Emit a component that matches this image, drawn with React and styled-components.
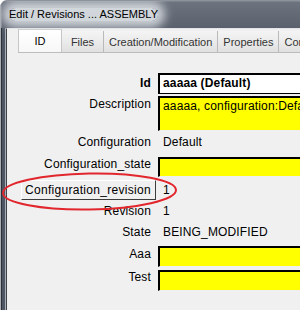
import React from "react";
import styled, { createGlobalStyle } from "styled-components";

const GlobalStyle = createGlobalStyle`
  html, body {
    margin: 0;
    padding: 0;
    background: #ffffff;
    overflow: hidden;
  }
  body {
    width: 300px;
    height: 310px;
    font-family: "Liberation Sans", Arial, sans-serif;
  }
`;

const Window = styled.div`
  position: relative;
  width: 440px;
  height: 330px;
  box-sizing: border-box;
  border-top: 1px solid #8d939b;
  border-left: 1px solid #a9aeb5;
  border-radius: 7px 0 0 0;
  background: #4e5663;
  display: flex;
  flex-direction: column;
  overflow: hidden;
`;

const TitleBar = styled.div`
  height: 27px;
  flex: none;
  display: flex;
  align-items: center;
  padding-left: 8px;
  background: linear-gradient(#6d747f, #5a616d);
  box-shadow: inset 1px 1px 0 #7b828c;
`;

const TitleText = styled.span`
  font-family: "Liberation Sans", Arial, sans-serif;
  font-size: 11px;
  line-height: 13px;
  color: #000;
  background: rgba(222, 226, 231, 0.9);
  border-radius: 9px;
  box-shadow: 0 0 10px 7px rgba(222, 226, 231, 0.85);
`;

const Frame = styled.div`
  flex: 1;
  display: flex;
  padding-left: 5px;
  box-shadow: inset 1px 0 0 #2c3038;
`;

const Client = styled.div`
  flex: 1;
  background: #f0f0f0;
  border-left: 1px solid #3e434a;
  border-top: 1px solid #e2e4e7;
  box-shadow: -1px 0 0 #aab0b8;
  padding-left: 11px;
  display: flex;
  flex-direction: column;
`;

const TabStrip = styled.div`
  height: 23px;
  display: flex;
  align-items: flex-end;
`;

const Tab = styled.div`
  box-sizing: border-box;
  height: ${(p) => (p.$active ? 23 : 21)}px;
  min-width: ${(p) => (p.$active ? 44 : 42)}px;
  padding: 0 5px;
  display: flex;
  align-items: center;
  justify-content: center;
  font-size: 11px;
  white-space: nowrap;
  color: ${(p) => (p.$active ? "#000" : "#333")};
  background: ${(p) =>
    p.$active
      ? "linear-gradient(#ffffff, #f7f7f7)"
      : "linear-gradient(#f4f4f4, #ebebeb 50%, #e0e0e0)"};
  border-left: ${(p) => (p.$active ? "1px solid #c6c6c6" : "none")};
  border-top: ${(p) => (p.$active ? "1px solid #d0d0d0" : "none")};
  border-right: 1px solid ${(p) => (p.$active ? "#c6c6c6" : "#b9b9b9")};
`;

const Panel = styled.div`
  flex: 1;
  border-top: 1px solid #bcbcbc;
  display: flex;
  flex-direction: column;
  padding-top: 20px;
`;

const Row = styled.div`
  display: grid;
  grid-template-columns: 138px 1fr;
  column-gap: 2px;
  height: ${(p) => p.$h}px;
  margin-top: ${(p) => p.$mt || 0}px;
  align-items: ${(p) => (p.$center ? "center" : "start")};
  font-size: 12px;
  letter-spacing: 0.15px;
  color: #000;
`;

const Label = styled.div`
  text-align: right;
  padding-right: 5px;
  padding-top: ${(p) => p.$pt || 0}px;
  line-height: 15px;
  font-weight: ${(p) => (p.$bold ? "bold" : "normal")};
  white-space: nowrap;
`;

const LabelButton = styled.div`
  justify-self: end;
  box-sizing: border-box;
  width: 135px;
  height: 20px;
  padding-right: 4px;
  text-align: right;
  line-height: 18px;
  white-space: nowrap;
  letter-spacing: 0.3px;
  border-top: 1px solid #ffffff;
  border-left: 1px solid #ffffff;
  border-right: 1px solid #3c3c3c;
  border-bottom: 1px solid #3c3c3c;
`;

const Field = styled.div`
  box-sizing: border-box;
  height: 100%;
  padding: 1px 3px;
  line-height: 15px;
  white-space: nowrap;
  overflow: hidden;
  font-weight: ${(p) => (p.$bold ? "bold" : "normal")};
  background: ${(p) => (p.$yellow ? "#ffff00" : "#ffffff")};
  border-top: 2px solid #000;
  border-left: 2px solid #000;
  border-bottom: 1px solid ${(p) => (p.$yellow ? "#f0f0f0" : "#000")};
`;

const Value = styled.div`
  padding-left: 5px;
  line-height: 15px;
  white-space: nowrap;
`;

const Annotation = styled.svg`
  position: absolute;
  left: 0;
  top: 169px;
  width: 182px;
  height: 44px;
  pointer-events: none;
`;

export default function App() {
  return (
    <>
      <GlobalStyle />
      <Window>
        <TitleBar>
          <TitleText>Edit / Revisions ... ASSEMBLY</TitleText>
        </TitleBar>
        <Frame>
          <Client>
            <TabStrip>
              <Tab $active>ID</Tab>
              <Tab>Files</Tab>
              <Tab>Creation/Modification</Tab>
              <Tab>Properties</Tab>
              <Tab>Configurations</Tab>
            </TabStrip>
            <Panel>
              <Row $h={21}>
                <Label $bold $pt={3}>Id</Label>
                <Field $bold>aaaaa (Default)</Field>
              </Row>
              <Row $h={35} $mt={2}>
                <Label $pt={1}>Description</Label>
                <Field $yellow>aaaaa, configuration:Default</Field>
              </Row>
              <Row $h={20} $mt={1} $center>
                <Label>Configuration</Label>
                <Value>Default</Value>
              </Row>
              <Row $h={20} $mt={5}>
                <Label>Configuration_state</Label>
                <Field $yellow />
              </Row>
              <Row $h={20} $mt={3} $center>
                <LabelButton>Configuration_revision</LabelButton>
                <Value>1</Value>
              </Row>
              <Row $h={20} $mt={1} $center>
                <Label>Revision</Label>
                <Value>1</Value>
              </Row>
              <Row $h={20} $mt={1} $center>
                <Label>State</Label>
                <Value>BEING_MODIFIED</Value>
              </Row>
              <Row $h={21} $mt={4}>
                <Label $pt={1}>Aaa</Label>
                <Field $yellow />
              </Row>
              <Row $h={21} $mt={3}>
                <Label>Test</Label>
                <Field $yellow />
              </Row>
            </Panel>
          </Client>
        </Frame>
        <Annotation viewBox="0 0 182 44">
          <ellipse
            cx="88.5"
            cy="21.5"
            rx="86.5"
            ry="18"
            fill="none"
            stroke="#e2262d"
            strokeWidth="2"
            transform="rotate(-1 88.5 21.5)"
          />
        </Annotation>
      </Window>
    </>
  );
}
